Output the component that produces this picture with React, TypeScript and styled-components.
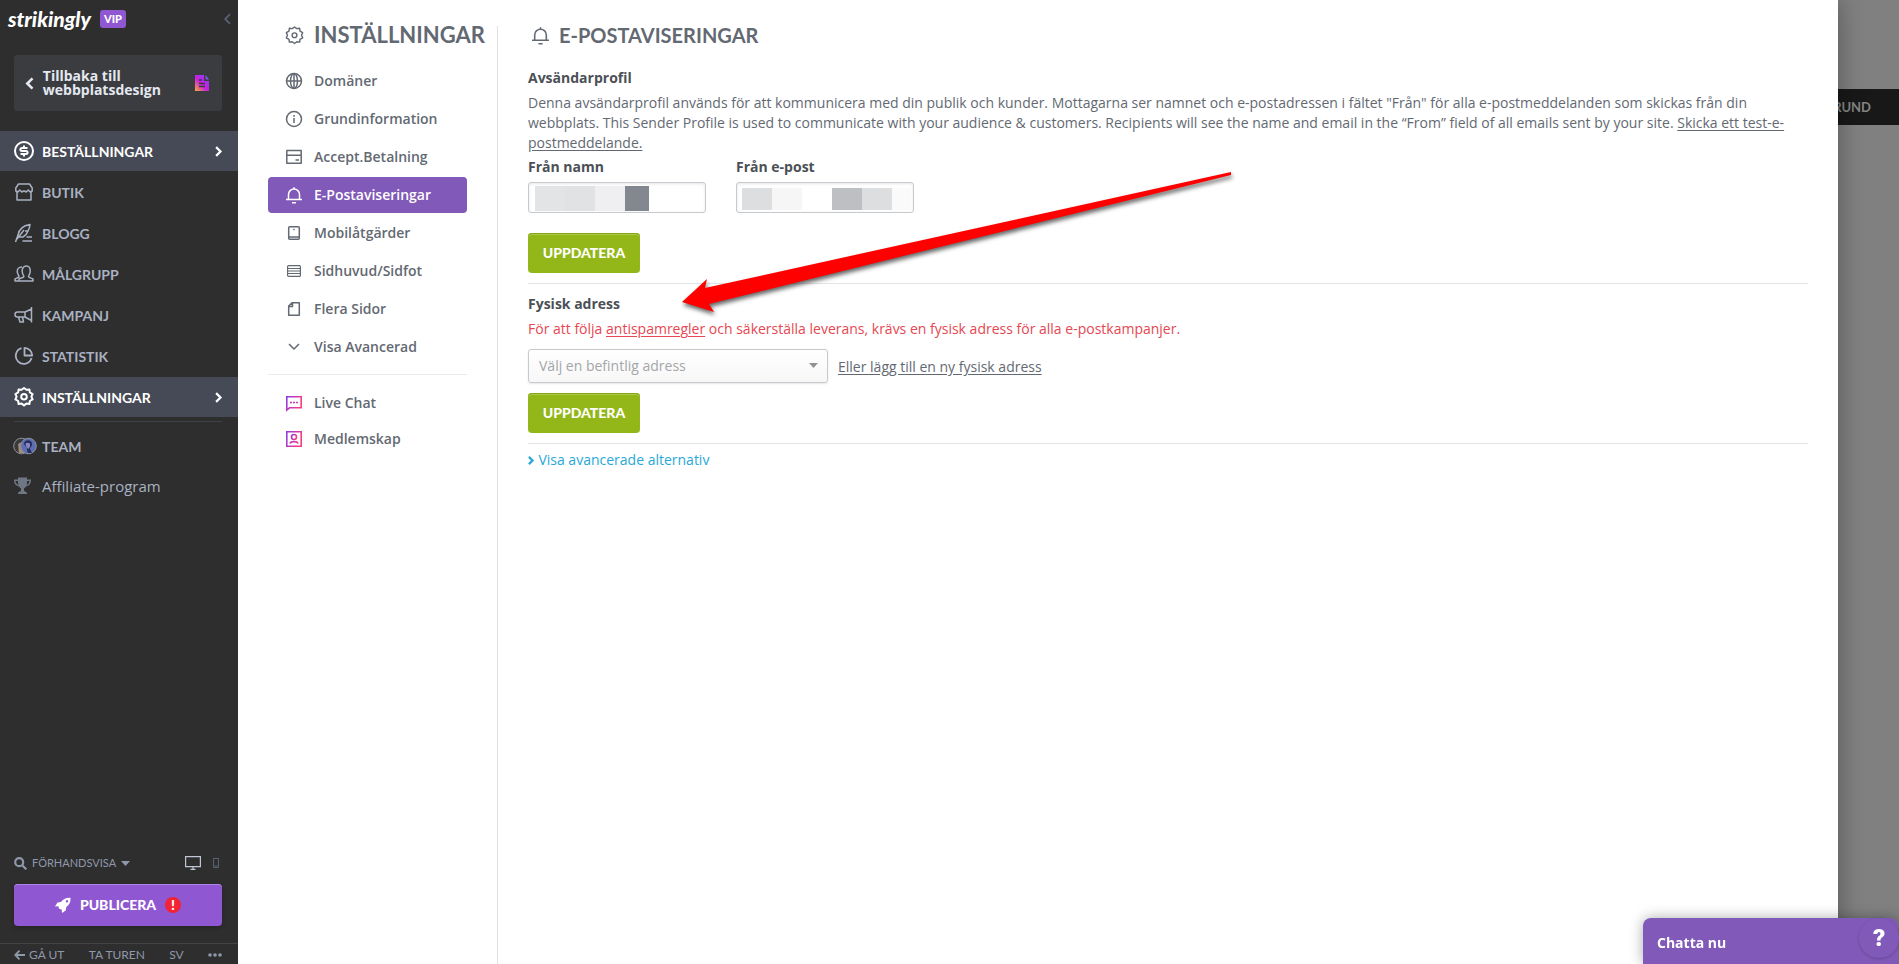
import React from "react";
import styled, { createGlobalStyle, css } from "styled-components";

const display = `Lato, "Liberation Sans", sans-serif`;
const body = `"Open Sans", "Noto Sans", sans-serif`;

const GlobalStyle = createGlobalStyle`
  *, *::before, *::after { box-sizing: border-box; }
  body { margin: 0; background: #808080; font-family: ${body}; font-size: 14px; color: #636972; }
  button, input, select { font: inherit; }
  button { cursor: pointer; }
`;

const Shell = styled.div`
  display: flex;
  min-height: 100vh;
  position: relative;
  overflow: hidden;
`;

/* ---------- sidebar ---------- */

const Sidebar = styled.aside`
  flex: 0 0 238px;
  display: flex;
  flex-direction: column;
  z-index: 2;
  background: #2e2e2e;
  color: #a9b1c2;
`;

const Brand = styled.header`
  display: flex;
  align-items: center;
  gap: 8px;
  height: 38px;
  padding: 0 7px 0 8px;
`;

const Wordmark = styled.span`
  width: 84px;
  font: italic 900 21px/24px ${display};
  color: #fff;
`;

const VipBadge = styled.span`
  padding: 0 4px;
  border-radius: 3px;
  background: #8f57d1;
  color: #fff;
  font: 900 11px/18px ${display};
`;

const IconButton = styled.button`
  display: flex;
  padding: 0;
  border: 0;
  background: none;
  color: inherit;
`;

const Collapse = styled(IconButton)`
  margin-left: auto;
  color: #566176;
`;

const BackLink = styled.a`
  display: flex;
  align-items: center;
  gap: 9px;
  height: 56px;
  margin: 17px 16px 20px 14px;
  padding: 0 13px 0 12px;
  border-radius: 3px;
  background: #3b3c3f;
  color: #e4e8f1;
  font: 700 14px/14px ${body};
  text-decoration: none;
  span { flex: 1; }
`;

const Nav = styled.nav`
  display: flex;
  flex-direction: column;
  gap: 1px;
`;

const NavItem = styled.a<{ $active?: boolean }>`
  display: flex;
  align-items: center;
  height: 40px;
  padding: 0 16px 0 14px;
  background: ${(p) => (p.$active ? "#464a56" : "transparent")};
  color: ${(p) => (p.$active ? "#fff" : "#a9b1c2")};
  font: 700 14px/20px ${display};
  text-decoration: none;
  span { flex: 1; padding: 1px 0 0 8px; }
`;

const NavRule = styled.hr`
  width: 208px;
  height: 1px;
  margin: 4px 0;
  border: 0;
  margin-left: 14px;
  background: #3f4044;
`;

const PlainItem = styled(NavItem)`
  font: 400 15px/20px ${body};
  span { padding: 0 0 0 10px; }
`;

const SidebarFoot = styled.div`
  margin-top: auto;
`;

const PreviewBar = styled.div`
  display: flex;
  align-items: center;
  gap: 12px;
  padding: 0 19px 0 14px;
  height: 20px;
  margin-bottom: 11px;
`;

const PreviewButton = styled.button`
  display: flex;
  align-items: center;
  gap: 5px;
  margin-right: auto;
  padding: 0;
  border: 0;
  background: none;
  color: #8e98ab;
  font: 400 11px/20px ${display};
`;

const Publish = styled.button`
  display: flex;
  align-items: center;
  justify-content: center;
  gap: 9px;
  width: 208px;
  height: 42px;
  margin: 0 16px 17px 14px;
  border: 0;
  border-radius: 4px;
  background: #8f57d1;
  box-shadow: inset 0 1px #b083e6, 0 2px 4px #0003;
  color: #fff;
  font: 900 14px/20px ${display};
`;

const Alert = styled.span`
  width: 16px;
  height: 16px;
  border-radius: 8px;
  background: #f02432;
  font: 900 14px/16px ${display};
`;

const FootLinks = styled.div`
  display: flex;
  align-items: center;
  justify-content: space-between;
  height: 21px;
  padding: 2px 16px 0 14px;
  border-top: 1px solid #434446;
  a {
    display: flex;
    align-items: center;
    gap: 4px;
    color: #8e98ab;
    font: 400 12px/16px ${display};
    text-decoration: none;
  }
`;

/* ---------- settings panel ---------- */

const Panel = styled.div`
  flex: 1;
  display: flex;
  min-width: 0;
  background: #fff;
  box-shadow: 0 0 24px #0005;
  z-index: 1;
`;

const SettingsMenu = styled.nav`
  flex: 0 0 260px;
  min-width: 0;
  display: flex;
  flex-direction: column;
  margin-top: 26px;
  padding: 0 30px;
  border-right: 1px solid #dfe1e3;
`;

const heading = css`
  margin: 0;
  display: flex;
  align-items: center;
  color: #636972;
  white-space: nowrap;
  svg { flex: none; }
`;

const MenuTitle = styled.h1`
  ${heading}
  gap: 10px;
  height: 18px;
  padding-left: 17px;
  margin-bottom: 19px;
  font: 700 22px/18px ${display};
`;

const MenuItem = styled.a<{ $active?: boolean }>`
  display: flex;
  align-items: center;
  gap: 11px;
  height: 36px;
  margin-bottom: 2px;
  padding-left: 17px;
  border-radius: 4px;
  background: ${(p) => (p.$active ? "#8159b8" : "transparent")};
  color: ${(p) => (p.$active ? "#fff" : "#636972")};
  font: 600 14px/20px ${body};
  text-decoration: none;
`;

const AppItem = styled(MenuItem)`
  margin: 0;
`;

const MenuRule = styled.hr`
  width: 100%;
  height: 1px;
  margin: 7px 0 10px;
  border: 0;
  background: #e8eaec;
`;

const Content = styled.main`
  flex: 1;
  min-width: 0;
  padding: 26px 30px;
`;

const ContentTitle = styled.h2`
  ${heading}
  gap: 9px;
  height: 18px;
  margin-bottom: 24px;
  padding-left: 3px;
  font: 700 20px/18px ${display};
`;

const SectionTitle = styled.h3`
  margin: 0;
  color: #4b5056;
  font: 700 14px/20px ${body};
`;

const Text = styled.p<{ $warn?: boolean }>`
  margin: ${(p) => (p.$warn ? "5px 0 10px" : "5px 0 4px")};
  color: ${(p) => (p.$warn ? "#e64751" : "#636972")};
  font: 400 14px/20px ${body};
`;

const Link = styled.a`
  color: inherit;
  text-decoration: underline;
  text-underline-offset: 2px;
`;

const FieldRow = styled.div`
  display: flex;
  gap: 30px;
  margin-bottom: 20px;
`;

const Field = styled.label`
  display: flex;
  flex-direction: column;
  gap: 5px;
  width: 178px;
  color: #4b5056;
  font: 700 14px/20px ${body};
`;

const TextInput = styled.input<{ $fill: string; $top: number; $height: number }>`
  width: 100%;
  height: 31px;
  padding: 4px 8px;
  border: 1px solid #c6c9cd;
  border-radius: 3px;
  background: #fff ${(p) => p.$fill} no-repeat 0 ${(p) => p.$top}px / 100% ${(p) => p.$height}px;
  box-shadow: inset 0 1px 3px #0000001a;
`;

const nameFill =
  "linear-gradient(90deg, transparent 6px, #e3e4e6 6px 36px, #e1e2e4 36px 66px, #efeff2 66px 96px, #83878f 96px 120px, transparent 120px)";
const mailFill =
  "linear-gradient(90deg, transparent 5px, #dddee0 5px 35px, #f6f6f6 35px 65px, #fff 65px 95px, #bebfc3 95px 125px, #dddee0 125px 155px, #fafafa 155px 174px, transparent 174px)";

const GreenButton = styled.button`
  display: block;
  width: 112px;
  height: 40px;
  padding: 0;
  border: 0;
  border-radius: 4px;
  background: #93b719;
  box-shadow: inset 0 1px #83a512, inset 0 2px #aac84b;
  color: #fff;
  font: 900 14px/20px ${display};
`;

const Rule = styled.hr`
  height: 1px;
  margin: 10px 0;
  border: 0;
  background: #e2e4e6;
`;

const AddressRow = styled.div`
  display: flex;
  align-items: center;
  gap: 10px;
  margin-bottom: 10px;
`;

const SelectBox = styled.div`
  position: relative;
  width: 300px;
  svg { position: absolute; right: 10px; top: 14px; pointer-events: none; }
`;

const Select = styled.select`
  display: block;
  width: 100%;
  height: 34px;
  padding: 0 30px 0 10px;
  appearance: none;
  border: 1px solid #c6c9cd;
  border-radius: 3px;
  background: linear-gradient(#fff, #f7f7f7);
  box-shadow: 0 1px 2px #0000001a;
  color: #a4a6a8;
  font: 400 14px/20px ${body};
`;

const AdvancedToggle = styled.button`
  display: flex;
  align-items: center;
  gap: 5px;
  margin-top: -4px;
  padding: 0;
  border: 0;
  background: none;
  color: #29a8d8;
  font: 400 14px/20px ${body};
`;

/* ---------- page behind the panel ---------- */

const Backdrop = styled.div`
  flex: 0 0 61px;
  padding-top: 89px;
  overflow: hidden;
`;

const BackdropBar = styled.div`
  display: flex;
  justify-content: flex-end;
  height: 36px;
  padding-right: 28px;
  background: #181818;
  color: #838383;
  font: 700 13px/36px ${display};
`;

const ChatBar = styled.button`
  position: fixed;
  right: 1px;
  bottom: 0;
  z-index: 2;
  width: 255px;
  height: 46px;
  padding: 4px 14px 0;
  border: 0;
  border-radius: 8px 8px 0 0;
  background: #8159b8;
  box-shadow: 0 0 14px #0005;
  color: #fff;
  font: 700 14px/20px ${body};
  text-align: left;
`;

const HelpButton = styled.button`
  position: fixed;
  right: 0;
  bottom: 6px;
  z-index: 3;
  width: 40px;
  height: 40px;
  padding: 0;
  border: 0;
  border-radius: 20px;
  background: #8159b8;
  box-shadow: 0 1px 3px #0003;
  color: #fff;
  font: 900 24px/40px Roboto, sans-serif;
`;

const Arrow = styled.svg`
  position: absolute;
  left: 676px;
  top: 166px;
  z-index: 2;
  pointer-events: none;
  filter: drop-shadow(1px 3px 2px #0009);
`;

/* ---------- icons ---------- */

type IconProps = { size?: number; w?: number; box?: number; children: React.ReactNode };
const Icon = ({ size = 20, w = 1.5, box = 20, children }: IconProps) => (
  <svg width={size} height={size} viewBox={`0 0 ${box} ${box}`} fill="none" stroke="currentColor" strokeWidth={w} strokeLinejoin="round" aria-hidden="true">
    {children}
  </svg>
);

const gearPath = "M7.6 2.8 10 1l2.4 1.8 3-.4.4 3 2.8 1.6-1.2 2.7 1.2 2.7-2.8 1.6-.4 3-3-.4L10 18.400l-2.400-1.800-3 .4-.4-3-2.800-1.600 1.200-2.700-1.200-2.700 2.800-1.600.4-3z";

const icons = {
  orders: (
    <Icon w={2}>
      <circle cx="10" cy="10" r="9" />
      <path d="M13.500 7H8.200c-2.400 0-2.400 3 0 3h3.600c2.400 0 2.400 3 0 3H6.500M10 4.500V7M10 13v2.500" />
    </Icon>
  ),
  shop: (
    <Icon>
      <path d="M4.500 2h11L18.200 6v3l-2 1-2-2-2 2-2.200-1.200L7.800 10l-2-2-2 2-2-1V6zM3 10v8h14v-8" />
    </Icon>
  ),
  blog: (
    <Icon>
      <path d="M1.500 19 4 12C5 6 9 2.500 16 1.500c-.3 3-1 5-2 6.500h-3M4 14h5c2-1 4-3 5-6M3 16 10 7M12.500 14H18M8.500 18H18" />
    </Icon>
  ),
  audience: (
    <Icon>
      <path d="M5 17h14v-2c-1-1-4-1-4.500-2.500 0-1 1.500-2 1.700-5C16.400 4 15 2 12.300 2S8 4 8.200 7.500c.2 3 1.700 4 1.700 5C9.500 14 6 14 5 15zM5 17H1v-2c1-1 3.500-1 4-2.500 0-1-1.500-2-1.700-4.500C3 5 4.500 3 8 3" />
    </Icon>
  ),
  campaign: (
    <Icon>
      <path d="M17.500 2v15.500M17.500 4 11 7H3.500a2 2 0 0 0 0 5H11l6.500 3.500M11 7v5M4.500 12l1.500 5h3.500l-1-5" />
    </Icon>
  ),
  stats: (
    <Icon w={1.8}>
      <path d="M7.500 2.200A8 8 0 1 0 17.500 12M10.500 1.800v7.700h7.700a8 8 0 0 0-7.700-7.700z" />
    </Icon>
  ),
  settings: (
    <Icon w={2}>
      <path d={gearPath} />
      <circle cx="10" cy="9.700" r="2.800" />
    </Icon>
  ),
  trophy: (
    <svg width="18" height="20" viewBox="0 0 18 20" fill="#6f7784" aria-hidden="true">
      <path d="M4 1.500h9v2h4c0 4-1.500 6-5 7-.7 1-1.500 1.500-2 2V15c2 .5 3 1 3 3H4c0-2 1-2.500 3-3v-2.500c-.5-.5-1.300-1-2-2-3.500-1-5-3-5-7h4zM1.500 5c.3 2 1.200 3.200 3 4-.4-1-.6-2.500-.6-4zm11.600 0c0 1.500-.2 3-.6 4 1.800-.8 2.700-2 3-4z" />
    </svg>
  ),
};

/* Two overlapping portraits, wider than the other sidebar icons. */
const AvatarPair = styled.svg`
  flex: none;
  margin: 0 -3px 0 -1px;
`;

const TeamAvatars = () => (
  <AvatarPair width="24" height="18" viewBox="0 0 24 18" aria-hidden="true">
    <circle cx="8.500" cy="9" r="7.800" fill="#3a393b" stroke="#8c919b" />
    <path d="M6 16c-1-3 0-5-1-8 1-3 5-3 6-1v9z" fill="#a28b79" />
    <circle cx="15.500" cy="9" r="7.800" fill="#5d6eb0" stroke="#8c919b" />
    <path d="M11 7c0-5 8-5 8 0 0 3-2 3-2 5l2 4h-4c-1-2-1-3-1-5z" fill="#242e5c" />
    <path d="M12.500 6.500c1-1 3-1 4.500 0v3l-1.500 2.500-2-1.500z" fill="#8a83c4" />
  </AvatarPair>
);

const Chevron = ({ dir, size, w, color }: { dir: "left" | "right"; size: number; w: number; color?: string }) => (
  <svg width={size * 0.6} height={size} viewBox="0 0 6 10" fill="none" stroke={color || "currentColor"} strokeWidth={w} overflow="visible" aria-hidden="true">
    <path d={dir === "left" ? "M5 1 1 5l4 4" : "M1 1l4 4-4 4"} />
  </svg>
);

const Caret = ({ color }: { color: string }) => (
  <svg width="9" height="5" viewBox="0 0 9 5" fill={color} aria-hidden="true">
    <path d="M0 0h9L4.500 5z" />
  </svg>
);

const Gradient = ({ id }: { id: string }) => (
  <defs>
    <linearGradient id={id} x1="0" y1="0" x2="1" y2="0.400">
      <stop offset="0" stopColor="#8a3fe0" />
      <stop offset="0.600" stopColor="#d238b4" />
      <stop offset="1" stopColor="#f53d80" />
    </linearGradient>
  </defs>
);

const bell = <path d="M1 13.500h16M3.500 13.500V8.500a5.500 5.500 0 0 1 11 0v5M9 3V1.200M7 16.800h4" />;
const menuIcon = (children: React.ReactNode) => (
  <Icon size={18} box={18}>
    {children}
  </Icon>
);

const menu = [
  { label: "Domäner", icon: menuIcon(<><circle cx="9" cy="9" r="7.500" /><ellipse cx="9" cy="9" rx="3.500" ry="7.500" /><path d="M1.500 9h15M9 1.500v15" /></>) },
  { label: "Grundinformation", icon: menuIcon(<><circle cx="9" cy="9" r="7.500" /><path d="M9 5v1.800M9 8v5" /></>) },
  { label: "Accept.Betalning", icon: menuIcon(<path d="M1.800 2.500h14.400v12.800H1.800zM1.800 7.200h14.400M10.500 12H14" />) },
  { label: "E-Postaviseringar", icon: menuIcon(bell), active: true },
  { label: "Mobilåtgärder", icon: menuIcon(<><rect x="3.700" y="2.700" width="10.600" height="12.600" rx="1" /><path d="M4 13h10M8.300 5.500h1.400" /></>) },
  { label: "Sidhuvud/Sidfot", icon: <Icon size={18} box={18} w={1.2}><rect x="2.600" y="3.600" width="12.800" height="10.800" rx="1" /><path d="M3 6.500h12M3 9h12M3 11.500h12" /></Icon> },
  { label: "Flera Sidor", icon: menuIcon(<path d="M7 2.700h7.300v12.600H3.700V6zM7.500 3v3.500H4" />) },
  { label: "Visa Avancerad", icon: menuIcon(<path d="M4 6l5 5 5-5" />) },
];

export default function App() {
  return (
    <>
      <GlobalStyle />
      <Shell>
        <Sidebar>
          <Brand>
            <Wordmark>strikingly</Wordmark>
            <VipBadge>VIP</VipBadge>
            <Collapse aria-label="Fäll ihop">
              <Chevron dir="left" size={12} w={1.5} />
            </Collapse>
          </Brand>
          <BackLink href="#">
            <Chevron dir="left" size={13} w={2} />
            <span>Tillbaka till webbplatsdesign</span>
            <svg width="14" height="16" viewBox="0 0 14 16" aria-hidden="true">
              <defs>
                <linearGradient id="doc" x1="0" y1="1" x2="1" y2="0">
                  <stop offset="0" stopColor="#f7b02c" />
                  <stop offset="0.450" stopColor="#c91fe0" />
                  <stop offset="0.750" stopColor="#a233ee" />
                  <stop offset="1" stopColor="#3fa0ff" />
                </linearGradient>
              </defs>
              <path d="M0 0h9v6h5v10H0zM10.500 0 14 4.500h-3.500z" fill="url(#doc)" />
              <path d="M4 5h3M4 8.500h6M4 11.500h6" stroke="#3b3c3f" strokeWidth="1.500" />
            </svg>
          </BackLink>
          <Nav>
            <NavItem href="#" $active>
              {icons.orders}
              <span>BESTÄLLNINGAR</span>
              <Chevron dir="right" size={11} w={2} />
            </NavItem>
            <NavItem href="#">{icons.shop}<span>BUTIK</span></NavItem>
            <NavItem href="#">{icons.blog}<span>BLOGG</span></NavItem>
            <NavItem href="#">{icons.audience}<span>MÅLGRUPP</span></NavItem>
            <NavItem href="#">{icons.campaign}<span>KAMPANJ</span></NavItem>
            <NavItem href="#">{icons.stats}<span>STATISTIK</span></NavItem>
            <NavItem href="#" $active>
              {icons.settings}
              <span>INSTÄLLNINGAR</span>
              <Chevron dir="right" size={11} w={2} />
            </NavItem>
          </Nav>
          <NavRule />
          <NavItem href="#"><TeamAvatars /><span>TEAM</span></NavItem>
          <PlainItem href="#">{icons.trophy}<span>Affiliate-program</span></PlainItem>

          <SidebarFoot>
            <PreviewBar>
              <PreviewButton>
                <svg width="13" height="13" viewBox="0 0 13 13" fill="none" stroke="currentColor" strokeWidth="2.200" aria-hidden="true">
                  <circle cx="5.200" cy="5.200" r="4" />
                  <path d="M8 8l4.300 4.300" />
                </svg>
                FÖRHANDSVISA
                <Caret color="#8e98ab" />
              </PreviewButton>
              <IconButton aria-label="Dator">
                <svg width="16" height="14" viewBox="0 0 16 14" fill="none" stroke="#c0c7d4" strokeWidth="1.200" aria-hidden="true">
                  <path d="M.6.600h14.800v10H.6zM8 10.500v2.500M5.500 13.300h5" />
                </svg>
              </IconButton>
              <IconButton aria-label="Mobil">
                <svg width="6" height="10" viewBox="0 0 6 10" fill="none" stroke="#566072" aria-hidden="true">
                  <path d="M.5.500h5v9h-5zM.5 8h5" />
                </svg>
              </IconButton>
            </PreviewBar>
            <Publish>
              <svg width="16" height="16" viewBox="0 0 16 16" fill="#fff" aria-hidden="true">
                <path d="M15.500.700C11 .3 8 2 6 5L2.500 5.500 0 9.500l3.500-.3.500 2.600 2.700.600L7 16l3.700-2.500.6-3.500c3-2 4.600-5 4.200-9.300zM12 3a1.200 1.200 0 1 1 0 2.400A1.200 1.200 0 0 1 12 3z" fillRule="evenodd" />
              </svg>
              PUBLICERA
              <Alert>!</Alert>
            </Publish>
            <FootLinks>
              <a href="#">
                <svg width="11" height="10" viewBox="0 0 11 10" fill="none" stroke="currentColor" strokeWidth="1.800" aria-hidden="true">
                  <path d="M11 5H1.500M5.500.700 1.300 5l4.200 4.300" />
                </svg>
                GÅ UT
              </a>
              <a href="#">TA TUREN</a>
              <a href="#">SV</a>
              <a href="#" aria-label="Mer">
                <svg width="14" height="4" viewBox="0 0 14 4" fill="currentColor" aria-hidden="true">
                  <circle cx="2" cy="2" r="1.800" />
                  <circle cx="7" cy="2" r="1.800" />
                  <circle cx="12" cy="2" r="1.800" />
                </svg>
              </a>
            </FootLinks>
          </SidebarFoot>
        </Sidebar>

        <Panel>
          <SettingsMenu>
            <MenuTitle>
              <Icon size={19} w={1.5}>
                <path d={gearPath} />
                <circle cx="10" cy="9.700" r="2.500" />
              </Icon>
              INSTÄLLNINGAR
            </MenuTitle>
            {menu.map((m) => (
              <MenuItem key={m.label} href="#" $active={m.active}>
                {m.icon}
                {m.label}
              </MenuItem>
            ))}
            <MenuRule />
            <AppItem href="#">
              <svg width="18" height="18" viewBox="0 0 18 18" fill="none" stroke="url(#chat)" strokeWidth="1.600" aria-hidden="true">
                <Gradient id="chat" />
                <path d="M1.800 16V2.800h14.400v11H4.500zM5 8.500h2M8 8.500h2M11 8.500h2" />
              </svg>
              Live Chat
            </AppItem>
            <AppItem href="#">
              <svg width="18" height="18" viewBox="0 0 18 18" fill="none" stroke="url(#member)" strokeWidth="1.600" aria-hidden="true">
                <Gradient id="member" />
                <path d="M1.800 1.800h14.400v14.400H1.800zM5 13.500c1-2.500 7-2.500 8 0" />
                <circle cx="9" cy="7" r="2.500" />
              </svg>
              Medlemskap
            </AppItem>
          </SettingsMenu>

          <Content>
            <ContentTitle>
              <Icon size={19} box={18}>{bell}</Icon>
              E-POSTAVISERINGAR
            </ContentTitle>
            <SectionTitle>Avsändarprofil</SectionTitle>
            <Text>
              Denna avsändarprofil används för att kommunicera med din publik och kunder. Mottagarna ser namnet och e-postadressen i fältet "Från" för alla e-postmeddelanden som skickas från din webbplats. This Sender Profile is used to communicate with your audience &amp; customers. Recipients will see the name and email in the “From” field of all emails sent by your site.{" "}
              <Link href="#">Skicka ett test-e-postmeddelande.</Link>
            </Text>
            <FieldRow>
              <Field>
                Från namn
                <TextInput type="text" $fill={nameFill} $top={3} $height={25} />
              </Field>
              <Field>
                Från e-post
                <TextInput type="email" $fill={mailFill} $top={5} $height={22} />
              </Field>
            </FieldRow>
            <GreenButton>UPPDATERA</GreenButton>
            <Rule />
            <SectionTitle>Fysisk adress</SectionTitle>
            <Text $warn>
              För att följa <Link href="#">antispamregler</Link> och säkerställa leverans, krävs en fysisk adress för alla e-postkampanjer.
            </Text>
            <AddressRow>
              <SelectBox>
                <Select aria-label="Fysisk adress" defaultValue="">
                  <option value="">Välj en befintlig adress</option>
                </Select>
                <Caret color="#8f9193" />
              </SelectBox>
              <Link href="#">Eller lägg till en ny fysisk adress</Link>
            </AddressRow>
            <GreenButton>UPPDATERA</GreenButton>
            <Rule />
            <AdvancedToggle>
              <Chevron dir="right" size={9} w={2.5} />
              Visa avancerade alternativ
            </AdvancedToggle>
          </Content>
        </Panel>

        <Backdrop>
          <BackdropBar>RUND</BackdropBar>
        </Backdrop>

        <Arrow width="562" height="154" viewBox="676 166 562 154" fill="#fe0000" aria-hidden="true">
          <path d="M682 302 707 279 705 288 1231 172V175L709 304 714 312z" />
        </Arrow>
        <ChatBar>Chatta nu</ChatBar>
        <HelpButton aria-label="Hjälp">?</HelpButton>
      </Shell>
    </>
  );
}
